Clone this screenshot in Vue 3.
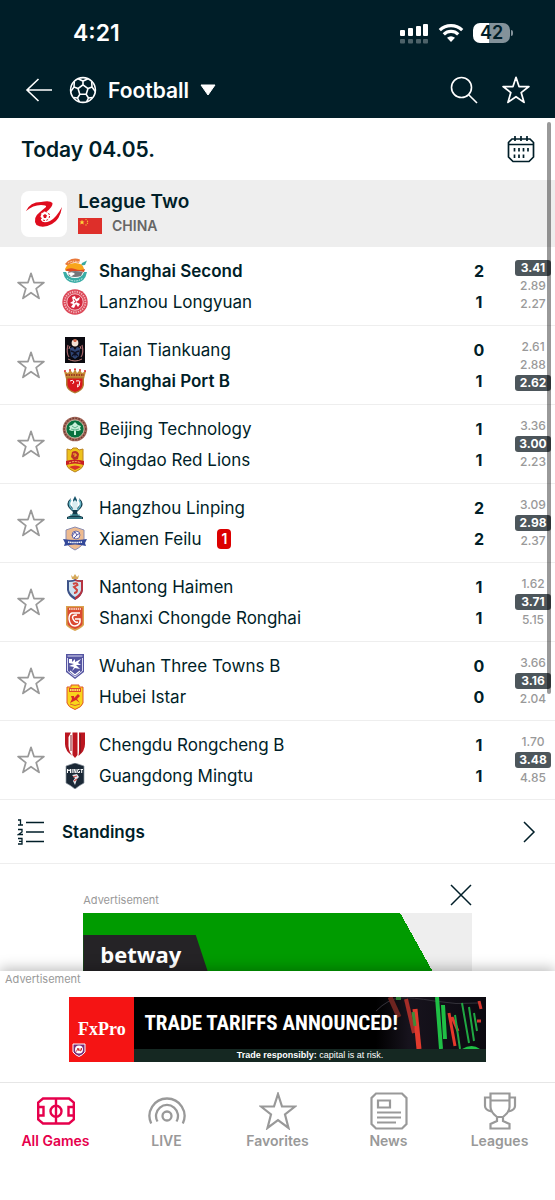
<script setup>
import { ref } from 'vue'

const matches = ref([
  { id: 1, teams: [{ n: 'Shanghai Second', s: 2, c: 'second', w: true }, { n: 'Lanzhou Longyuan', s: 1, c: 'lanzhou' }], odds: ['3.41', '2.89', '2.27'], hit: 0 },
  { id: 2, teams: [{ n: 'Taian Tiankuang', s: 0, c: 'taian' }, { n: 'Shanghai Port B', s: 1, c: 'port', w: true }], odds: ['2.61', '2.88', '2.62'], hit: 2 },
  { id: 3, teams: [{ n: 'Beijing Technology', s: 1, c: 'beijing' }, { n: 'Qingdao Red Lions', s: 1, c: 'qingdao' }], odds: ['3.36', '3.00', '2.23'], hit: 1 },
  { id: 4, teams: [{ n: 'Hangzhou Linping', s: 2, c: 'linping' }, { n: 'Xiamen Feilu', s: 2, c: 'xiamen', red: 1 }], odds: ['3.09', '2.98', '2.37'], hit: 1 },
  { id: 5, teams: [{ n: 'Nantong Haimen', s: 1, c: 'nantong' }, { n: 'Shanxi Chongde Ronghai', s: 1, c: 'shanxi' }], odds: ['1.62', '3.71', '5.15'], hit: 1 },
  { id: 6, teams: [{ n: 'Wuhan Three Towns B', s: 0, c: 'wuhan' }, { n: 'Hubei Istar', s: 0, c: 'hubei' }], odds: ['3.66', '3.16', '2.04'], hit: 1 },
  { id: 7, teams: [{ n: 'Chengdu Rongcheng B', s: 1, c: 'chengdu' }, { n: 'Guangdong Mingtu', s: 1, c: 'mingtu' }], odds: ['1.70', '3.48', '4.85'], hit: 1 }
])

const tabs = [
  { label: 'All Games', icon: 'pitch', on: true },
  { label: 'LIVE', icon: 'live' },
  { label: 'Favorites', icon: 'bigstar' },
  { label: 'News', icon: 'news' },
  { label: 'Leagues', icon: 'cup' }
]
</script>

<template>
  <div class="app">
    <svg class="defs" aria-hidden="true">
      <symbol id="star" viewBox="0 0 26 26">
        <path d="M13 1.200 15.800 9.800H25L17.800 15.400 20.500 24.500 13 19.200 5.500 24.500 8.200 15.400 1 9.800H10.200Z" fill="none" stroke="currentColor" stroke-width="1.600" stroke-linejoin="round" />
      </symbol>

      <symbol id="second" viewBox="0 0 26 26">
        <path d="M3 6A12 12 0 0 1 18 1.500L17 5A9 9 0 0 0 6 8Z" fill="#e9793a" />
        <path d="M20 5 25 2.500 23 7 19 7.500Z" fill="#3aa9a0" />
        <path d="M3 11Q5 5 13 5T22 11L21 13H4Z" fill="#f8a51b" />
        <path d="M3 12Q8 9 13 11T23 11L22 14Q14 12 8 14Z" fill="#e04a23" />
        <path d="M6 14Q13 12 21 14L19 18Q13 20 7 18Z" fill="#75777b" />
        <path d="M6 15Q11 13 13 16L9 18.500Z" fill="#fff" />
        <path d="M1 14 4 14Q6 20 13 20T22 14L25 14Q23 25 13 25T1 14Z" fill="#3aada6" />
        <path d="M5 20Q13 26 21 20" fill="none" stroke="#d8f0ec" stroke-width="1" stroke-dasharray="1.500 1" />
        <path d="M6 5Q11 2 17 4" fill="none" stroke="#ffe1c4" stroke-width="1" stroke-dasharray="1.500 1" />
      </symbol>
      <symbol id="lanzhou" viewBox="0 0 26 26">
        <circle cx="13" cy="13" r="12.700" fill="#dc4757" />
        <circle cx="13" cy="13" r="10.400" fill="none" stroke="#fff" stroke-width="1.800" stroke-dasharray="1.300 1.100" opacity=".6" />
        <circle cx="13" cy="13" r="8.200" fill="#d4283d" stroke="#fff" stroke-width=".7" />
        <path d="M10 8 13 7 14 10 18 8 17 11 14 13 18 15 16 18 14 15 12 19 9 18 11 15 8 14 11 12Z" fill="#fff" />
        <path d="M12 10 14 13 12 14" fill="none" stroke="#d4283d" />
      </symbol>
      <symbol id="taian" viewBox="0 0 26 26">
        <path d="M3 0H23V26H3Z" fill="#0b0a10" />
        <circle cx="13" cy="6" r="3.400" fill="#f1e1d4" />
        <path d="M11 3 13 2 15 3 14 5H12Z" fill="#cf674b" />
        <path d="M6 8Q4 16 7 20M20 8Q22 16 19 20" fill="none" stroke="#a56468" stroke-width="1.200" />
        <path d="M8 11 11 10 13 13 15 10 18 11 17 19 13 22 9 19Z" fill="#304777" />
        <path d="M9 14 12 15 13 18 14 15 17 14M10 19 13 16 16 19" fill="none" stroke="#101020" stroke-width="1.400" />
        <path d="M6 22Q13 26 20 22M8 9 7 12M18 9 19 12" fill="none" stroke="#bb7a78" stroke-width="1" />
      </symbol>
      <symbol id="port" viewBox="0 0 26 26">
        <path d="M2 3 6 5 8 2 11 5 13 1 15 5 18 2 20 5 24 3 22 11H4Z" fill="#c58b35" />
        <path d="M4 7H22" stroke="#8d231d" stroke-width="1.400" stroke-dasharray="1.500 1" />
        <path d="M4 9H22V17Q21 23 13 25.500 5 23 4 17Z" fill="#b37b31" />
        <path d="M5.500 10.500H20.500V17Q20 22 13 24 6 22 5.500 17Z" fill="#d8171d" />
        <path d="M8 13Q11 11 12 14L10.500 16M14 13Q19 12 17.500 15 18 18 15.500 19L16 16" fill="none" stroke="#fff" stroke-width="1" />
        <g fill="#d8262c"><circle cx="3" cy="3" r="1" /><circle cx="8" cy="2" r="1" /><circle cx="13" cy="1.300" r="1" /><circle cx="18" cy="2" r="1" /><circle cx="23" cy="3" r="1" /></g>
      </symbol>
      <symbol id="beijing" viewBox="0 0 26 26">
        <circle cx="13" cy="13" r="12.300" fill="#a66a5c" />
        <circle cx="13" cy="13" r="10.800" fill="none" stroke="#6b3b33" stroke-width="1.400" stroke-dasharray="1.500 1.500" />
        <circle cx="13" cy="13" r="9" fill="#08713e" stroke="#d9d2bd" stroke-width=".7" />
        <path d="M13 6 16 9 19 10 18 12 19 14 16 15 14 14.500V19H12V14.500L10 15 7 14 8 12 7 10 10 9Z" fill="#c8efd8" />
        <path d="M10 10 13 12 16 10M9 13 13 14 17 13" stroke="#43a576" stroke-width=".8" fill="none" />
      </symbol>
      <symbol id="qingdao" viewBox="0 0 26 26">
        <path d="M5 2 9 3 11 1H15L17 3 21 2V19Q20 22 13 25 6 22 5 19Z" fill="#edc21c" stroke="#ba8222" />
        <path d="M10 5Q15 2 17 7L16 12 12 13 9 10Z" fill="#bd3028" />
        <path d="M11 7H14V9H12" stroke="#f8c62b" fill="none" />
        <path d="M4 14Q13 11 22 14V18Q13 15 4 18Z" fill="#c81f25" />
        <path d="M7 20Q13 17 19 20L13 23Z" fill="#d93227" />
        <path d="M7 16Q13 13 19 16" fill="none" stroke="#ffdf6b" stroke-width=".8" stroke-dasharray="2 1" />
      </symbol>
      <symbol id="linping" viewBox="0 0 26 26">
        <path d="M9 3Q3 8 7 13L11 17 10 20 5 22V24H21V22L16 20 15 17 19 13Q23 8 17 3L19 9 15 13H11L7 9Z" fill="#123a4a" />
        <path d="M13 1 15 5 14 11H12L11 5Z" fill="#15526a" />
        <path d="M9 5Q5 10 11 15M17 5Q21 10 15 15" fill="none" stroke="#64b3c5" stroke-width="1.500" />
        <path d="M10 8 13 5 16 8 15 15H11Z" fill="#d9edf1" />
        <path d="M8 20H18M6 23H20" stroke="#50aab4" stroke-width="1.200" />
      </symbol>
      <symbol id="xiamen" viewBox="0 0 26 26">
        <path d="M4 4 13 1 22 4V15Q21 20 13 24 5 20 4 15Z" fill="#eebb90" stroke="#8a8cb2" />
        <circle cx="14" cy="9" r="4" fill="#f4f2fa" stroke="#6b6da5" />
        <path d="M10 10 13 6 15 9 18 7M12 12 15 9" stroke="#5656a0" fill="none" />
        <path d="M1 13Q13 15 25 13L23 17 24 20Q13 17 2 20L3 17Z" fill="#334899" />
        <path d="M6 16Q13 17 20 16" stroke="#fff" stroke-width="1.500" stroke-dasharray="1.500 .6" fill="none" />
      </symbol>
      <symbol id="nantong" viewBox="0 0 26 26">
        <path d="M9 1 11 3 13 0 15 3 17 1 16 5H10Z" fill="#d6a95a" />
        <path d="M5 6Q10 7 13 5 16 7 21 6V16Q20 22 13 26 6 22 5 16Z" fill="#3c5288" />
        <path d="M13 5Q16 7 21 6V16Q20 22 13 26Z" fill="#b73340" />
        <path d="M7 8Q11 8 13 7 15 8 19 8V16Q18 20 13 23 8 20 7 16Z" fill="#cde1ef" />
        <path d="M11 10Q15 8 15.500 11L12 13 15 16Q15 19 12 19" fill="none" stroke="#cf453e" stroke-width="2" />
      </symbol>
      <symbol id="shanxi" viewBox="0 0 26 26">
        <path d="M4 1H22V20Q20 23 13 26 6 23 4 20Z" fill="#d9a24d" />
        <path d="M5.500 2.500H20.500V19Q19 22 13 24 7 22 5.500 19Z" fill="#da4932" />
        <path d="M7 4H19" stroke="#fff2dc" stroke-width="1.600" stroke-dasharray="1.500 .7" />
        <path d="M18 8H10Q7 9 7 14 8 21 13 21 19 20 18 14H13M15 10Q9 10 11 14T16 17" fill="none" stroke="#fff" stroke-width="1.500" />
      </symbol>
      <symbol id="wuhan" viewBox="0 0 26 26">
        <path d="M4 1H22V19L13 26 4 19Z" fill="#5555a1" />
        <path d="M5.500 3H20.500M5.500 5V18L13 24 20.500 18V5" stroke="#dadaf1" fill="none" stroke-width="1" />
        <path d="M7 6H10V9L13 6V9L19 6 16 10 19 12 14 12 18 16 13 15 10 18 12 14 7 13 12 11 7 10Z" fill="#fff" />
        <path d="M8 18 13 22 18 18" fill="none" stroke="#fff" stroke-width="1.300" />
      </symbol>
      <symbol id="hubei" viewBox="0 0 26 26">
        <path d="M5 3H9V1H17V3H21V19Q20 23 13 25.500 6 23 5 19Z" fill="#f9d51c" stroke="#df542b" />
        <path d="M7 4H19V8H7Z" fill="#df4c2b" />
        <path d="M8 6H18" stroke="#ffe268" stroke-width="2" stroke-dasharray="1.500 .7" />
        <path d="M9 12H12V14L16 10 18 12 15 15 18 19 14 16 8 19 10 15Z" fill="#d82b26" />
        <path d="M8 20Q13 23 18 20" stroke="#d9662b" fill="none" />
      </symbol>
      <symbol id="chengdu" viewBox="0 0 26 26">
        <path d="M3 .500H9L6.500 5V14Q7 20 10.500 24 3 19 3 12Z" fill="#bb1620" />
        <path d="M10.500 .500H15.500V23L13 26 10.500 23Z" fill="#bb1620" />
        <path d="M17 .500H23V12Q23 19 16.500 24 17 21 17 18Z" fill="#bb1620" />
        <path d="M9 3V19M18.500 2V21" stroke="#8a1620" stroke-width="1" />
      </symbol>
      <symbol id="mingtu" viewBox="0 0 26 26">
        <path d="M4 3 13 0 22 3V20Q18 22 13 26 8 22 4 20Z" fill="#1b2836" stroke="#8e98a2" stroke-width=".7" />
        <path d="M5.500 10V6L7 8 8.500 6V10M10.200 6V10M12 10V6L14 10V6M17.500 6.500H15.700V9.500H17.500V8M18.500 6.500H21M19.700 6.500V10" fill="none" stroke="#fff" stroke-width="1" />
        <path d="M10 12 15 11 17 14 15 16 13 22 11 18 13 15Z" fill="#e4e8ec" />
        <path d="M11 14 15 13M12 18 15 16" stroke="#d04b49" stroke-width="1.200" />
      </symbol>

      <symbol id="pitch" viewBox="0 0 38 38">
        <path d="M6 6.500H32L36.800 10.500V27.500L32 31.500H6L1.200 27.500V10.500ZM19 6.500V31.500M1.200 15H6.500V23.500H1.200M36.800 15H31.500V23.500H36.800" fill="none" stroke="currentColor" stroke-width="2.400" />
        <circle cx="19" cy="19.200" r="5.500" fill="none" stroke="currentColor" stroke-width="2.400" />
      </symbol>
      <symbol id="live" viewBox="0 0 38 38">
        <g fill="none" stroke="currentColor" stroke-width="2.300">
          <circle cx="19" cy="24" r="4.500" />
          <path d="M9.500 29.500A11 11 0 1 1 28.500 29.500M3.200 31.500A17.500 17.500 0 1 1 34.800 31.500" />
        </g>
      </symbol>
      <symbol id="bigstar" viewBox="0 0 38 38">
        <path d="M19 2 23 14.500H36L26 22.500 29.500 36 19 28.200 8.500 36 12 22.500 2 14.500H15Z" fill="none" stroke="currentColor" stroke-width="2.200" />
      </symbol>
      <symbol id="news" viewBox="0 0 38 38">
        <path d="M6 1.500H32L36.500 6V32L32 36.500H6L1.500 32V6ZM8 8.500H20V15.500H8ZM7 20.500H31M7 25.500H31M7 30.500H26" fill="none" stroke="currentColor" stroke-width="2.200" />
      </symbol>
      <symbol id="cup" viewBox="0 0 38 38">
        <path d="M9.500 1.500H28.500V15Q28.500 20 22 25V29L28.500 32V36.500H9.500V32L16 29V25Q9.500 20 9.500 15ZM9.500 8.500H28.500M9.500 5.500H4V14Q4 18 10.500 19.500M28.500 5.500H34V14Q34 18 27.500 19.500M16 25H22" fill="none" stroke="currentColor" stroke-width="2.200" />
      </symbol>
    </svg>

    <header class="top">
      <div class="status">
        <time class="clock">4:21</time>
        <div class="signals">
          <svg width="30" height="22" viewBox="0 0 30 22" fill="#fff" aria-hidden="true">
            <rect x="1" y="8" width="5" height="6" rx="1" /><rect x="9" y="6" width="5" height="8" rx="1" /><rect x="17" y="4" width="5" height="10" rx="1" /><rect x="24" y="2" width="5" height="12" rx="1" />
            <g opacity=".3"><rect x="1" y="17" width="5" height="4.500" rx="1" /><rect x="9" y="17" width="5" height="4.500" rx="1" /><rect x="17" y="17" width="5" height="4.500" rx="1" /><rect x="24" y="17" width="5" height="4.500" rx="1" /></g>
          </svg>
          <svg width="26" height="20" viewBox="0 0 26 20" aria-hidden="true">
            <path d="M1.800 7.200A16 16 0 0 1 24.200 7.200M5.800 11.300A10.300 10.300 0 0 1 20.200 11.300" fill="none" stroke="#fff" stroke-width="3.200" />
            <path d="M13 19 9 14.800Q13 11.800 17 14.800Z" fill="#fff" />
          </svg>
          <div class="battery"><span>42</span></div>
        </div>
      </div>
      <nav class="bar">
        <button class="plain" aria-label="Back">
          <svg width="28" height="26" viewBox="0 0 28 26" fill="none" stroke="#fff" stroke-width="1.600"><path d="M27 13H2M13.500 2 2 13 13.500 24" /></svg>
        </button>
        <button class="plain sport">
          <svg width="28" height="28" viewBox="0 0 28 28" fill="none" stroke="#fff" stroke-width="1.600" aria-hidden="true">
            <circle cx="14" cy="14" r="12.400" />
            <path d="M14 8.800 19 12.500 17.200 18.300H10.800L9 12.500ZM14 8.800V5M19 12.500 23 11M17.200 18.300 19.500 22M10.800 18.300 8.500 22M9 12.500 5 11M9 2.700 14 5 19 2.700M5 11 5.300 5.500M5 11 1.700 15.500M4.500 21.500 8.500 22 10.500 26M17.500 26 19.500 22 23.500 21.500M26.300 15.500 23 11 22.700 5.500" />
          </svg>
          <span>Football</span>
          <svg width="16" height="12" viewBox="0 0 16 12" aria-hidden="true"><path d="M1 1H15L8 11Z" fill="#fff" stroke="#fff" stroke-linejoin="round" /></svg>
        </button>
        <button class="plain push" aria-label="Search">
          <svg width="28" height="28" viewBox="0 0 28 28" fill="none" stroke="#fff" stroke-width="1.600"><circle cx="11.500" cy="11.500" r="10" /><path d="M18.700 18.700 27 27" /></svg>
        </button>
        <button class="plain" aria-label="Favorites"><svg class="i28"><use href="#star" /></svg></button>
      </nav>
    </header>

    <main class="content">
      <div class="day">
        <h1>Today 04.05.</h1>
        <button class="plain" aria-label="Calendar">
          <svg width="28" height="28" viewBox="0 0 28 28" fill="none" stroke="#001e28" stroke-width="1.700">
            <path d="M5 4H23L26.500 7.500V22L22 26.500H6L1.500 22V7.500ZM1.500 9.500H26.500M8 1V6M14 1V6M20 1V6" />
            <path d="M7.500 13V16.500M12 13V16.500M16.500 13V16.500M21 13V16.500M7.500 19.500V23M12 19.500V23M16.500 19.500V23" />
          </svg>
        </button>
      </div>

      <section class="league">
        <svg class="badge" viewBox="0 0 46 46" aria-hidden="true">
          <path d="M5 20Q9 11 20 11 29 9 31.500 12 32 16 25 21 19 26 20 29 22 33 29 30 35 27 41 16 39 29 31 33 22 38 15.500 34 11 27 19 21L25 16Q26 14 20 14 12 14 5 20Z" fill="#df0c1e" />
          <circle cx="24" cy="25" r="4.500" fill="#fff" stroke="#df0c1e" stroke-dasharray="2 1.500" />
          <path d="M24 23 26 24.500 25 27H23L22 24.500Z" fill="#df0c1e" />
        </svg>
        <div>
          <h2>League Two</h2>
          <p class="country">
            <svg width="24" height="16" viewBox="0 0 24 16" aria-hidden="true">
              <rect width="24" height="16" fill="#de2f2a" />
              <path d="M4 1.500 4.700 3.500H6.500L5.200 4.600 5.700 6.500 4 5.400 2.300 6.500 2.800 4.600 1.500 3.500H3.300Z" fill="#ffd83b" />
              <g fill="#f8bd35"><circle cx="8" cy="1.600" r=".7" /><circle cx="9.500" cy="3.200" r=".7" /><circle cx="9.500" cy="5.300" r=".7" /><circle cx="8" cy="7" r=".7" /></g>
            </svg>
            <span>CHINA</span>
          </p>
        </div>
      </section>

      <ul class="list">
        <li v-for="m in matches" :key="m.id" class="match">
          <button class="plain fav" :aria-label="'Add ' + m.teams[0].n + ' match to favorites'"><svg class="i28"><use href="#star" /></svg></button>
          <div class="teams">
            <div v-for="t in m.teams" :key="t.n" class="team" :class="{ win: t.w }">
              <svg class="crest" aria-hidden="true"><use :href="'#' + t.c" /></svg>
              <span>{{ t.n }}</span>
              <span v-if="t.red" class="red">{{ t.red }}</span>
              <b class="score">{{ t.s }}</b>
            </div>
          </div>
          <div class="odds">
            <span v-for="(o, i) in m.odds" :key="i" :class="{ hit: m.hit === i }">{{ o }}</span>
          </div>
        </li>
      </ul>

      <a href="#standings" class="standings">
        <svg width="28" height="28" viewBox="0 0 28 28" fill="none" stroke="#001e28" stroke-width="1.700" aria-hidden="true">
          <path d="M9 4.500H27M9 14H27M9 23.500H27" />
          <path d="M1 2H3.500V7M1 7H6M1 11.500H5V14L1.500 16.500H6M1 20.500H5V26H1M2 23.300H5" stroke-width="1.300" />
        </svg>
        <span>Standings</span>
        <svg width="14" height="22" viewBox="0 0 14 22" fill="none" stroke="#001e28" stroke-width="1.500" aria-hidden="true"><path d="M2 1 12 11 2 21" /></svg>
      </a>

      <aside class="slot">
        <div class="slothead">
          <span class="adlabel">Advertisement</span>
          <button class="plain" aria-label="Close advertisement">
            <svg width="22" height="22" viewBox="0 0 22 22" stroke="#001e28" stroke-width="1.500"><path d="M1 1 21 21M21 1 1 21" /></svg>
          </button>
        </div>
        <a href="#betway" class="betway"><span>betway</span></a>
      </aside>
      <div class="scrollbar"></div>
    </main>

    <footer class="bottom">
      <span class="adlabel">Advertisement</span>
      <a href="#fxpro" class="fx">
        <span class="fxlogo">FxPro
          <svg class="shield" viewBox="0 0 14 14" aria-hidden="true"><path d="M1 1H13V9Q11 12 7 13.500 3 12 1 9Z" fill="#782c78" stroke="#fff" /><circle cx="7" cy="6.500" r="4" fill="#fff" /><path d="M4.500 8.500 6 5 7 8M8 5.500V8Q10 8 9.500 5" fill="none" stroke="#c5242e" /></svg>
        </span>
        <span class="fxbody">
          <svg class="chart" viewBox="0 0 110 52" preserveAspectRatio="none" aria-hidden="true">
            <path d="M0 14Q12 2 24 1T58 4 102 6" fill="none" stroke="#34323a" />
            <path d="M14 0 23 20" stroke="#6d2420" stroke-width="5" />
            <path d="M20 0H25" stroke="#2f7a34" stroke-width="6" />
            <path d="M30 2 38 36" stroke="#a52d28" stroke-width="4" />
            <path d="M39 12 43 52" stroke="#e23a2d" stroke-width="5" />
            <path d="M37 15 39 29" stroke="#3f8b38" stroke-width="3" />
            <path d="M61 0 65 52M67 8 69 42" stroke="#1fbf45" stroke-width="4" />
            <path d="M73 16 79 49M76 20 82 34" stroke="#e5392b" stroke-width="3" />
            <path d="M79 18 84 52M86 6 93 46M93 10 98 44M98 16 101 34" stroke="#20a742" stroke-width="2" />
            <path d="M103 4 105 12M101 24 105 24" stroke="#d5362e" stroke-width="3" />
            <path d="M86 52Q96 46 104 52Z" fill="#1fbf45" />
          </svg>
          <strong>TRADE TARIFFS ANNOUNCED!</strong>
          <small><b>Trade responsibly:</b> capital is at risk.</small>
        </span>
      </a>
      <nav class="tabs">
        <a v-for="t in tabs" :key="t.label" :href="'#' + t.icon + '-tab'" :class="{ on: t.on }">
          <svg aria-hidden="true"><use :href="'#' + t.icon" /></svg>
          <span>{{ t.label }}</span>
        </a>
      </nav>
    </footer>
  </div>
</template>

<style>
body { margin: 0; background: #fff; }
</style>

<style scoped>
.app { display: flex; flex-direction: column; height: 100vh; overflow: hidden; font-family: Inter, "Liberation Sans", sans-serif; color: #001e28; }
.defs { position: absolute; width: 0; height: 0; }
h1, h2, p, ul { margin: 0; padding: 0; list-style: none; }
a { color: inherit; text-decoration: none; }
.plain { display: flex; align-items: center; padding: 0; border: 0; background: none; color: inherit; font: inherit; }
.i28 { width: 28px; height: 28px; }

.top { flex: none; background: #001e28; color: #fff; }
.status { display: flex; align-items: center; justify-content: space-between; height: 42px; padding: 12px 45px 8px 73px; }
.clock { font-size: 23px; font-weight: 600; }
.signals { display: flex; align-items: center; gap: 9px; }
.battery { position: relative; width: 37px; height: 20px; border-radius: 7px; background: linear-gradient(90deg, #fff 43%, #83929a 43%); color: #001e28; font-size: 18px; font-weight: 600; line-height: 20px; text-align: center; }
.battery::after { content: ""; position: absolute; left: 38px; top: 7px; width: 2px; height: 6px; border-radius: 0 2px 2px 0; background: #83929a; }
.bar { display: flex; align-items: center; gap: 24px; height: 56px; padding: 0 25px; }
.bar .sport { gap: 11px; margin-left: -8px; font-size: 21px; font-weight: 600; }
.push { margin-left: auto; }

.content { position: relative; flex: 1; min-height: 0; overflow: hidden; }
.day { display: flex; align-items: center; justify-content: space-between; height: 62px; padding: 0 20px 0 21px; }
h1 { font-size: 21px; font-weight: 600; }
.league { display: flex; align-items: center; gap: 11px; height: 67px; padding: 0 21px; background: #eee; }
.badge { width: 46px; height: 46px; border-radius: 8px; background: #fff; }
h2 { font-size: 19px; font-weight: 600; line-height: 24px; }
.country { display: flex; align-items: center; gap: 10px; color: #666; font-size: 14px; font-weight: 600; line-height: 24px; }

.match { display: flex; align-items: center; height: 78px; padding-right: 4px; border-bottom: 1px solid #eee; }
.fav { justify-content: center; width: 62px; color: #999; }
.teams { flex: 1; }
.team { display: flex; align-items: center; height: 31px; font-size: 17px; }
.crest { width: 26px; height: 26px; margin-right: 11px; }
.win { font-weight: 600; }
.red { margin-left: 16px; width: 14px; border-radius: 4px; background: #dc0000; color: #fff; font-size: 14px; font-weight: 600; line-height: 20px; text-align: center; }
.score { width: 20px; margin: 0 26px 0 auto; font-size: 16px; font-weight: 700; text-align: center; }
.odds { display: flex; flex-direction: column; gap: 2px; width: 36px; color: #999; font-size: 12px; font-weight: 500; line-height: 16px; text-align: center; }
.hit { border-radius: 3px; background: #4d565b; color: #fff; font-weight: 700; }

.standings { display: flex; align-items: center; gap: 17px; height: 63px; padding: 0 19px 0 17px; border-bottom: 1px solid #eee; font-size: 17px; font-weight: 600; }
.standings span { flex: 1; }

.slot { width: 70%; margin: 0 auto; padding-top: 20px; }
.slothead { display: flex; align-items: flex-start; justify-content: space-between; height: 29px; }
.slothead .adlabel { padding-top: 8px; }
.adlabel { color: #999; font-size: 11px; line-height: 16px; }
.betway { display: flex; align-items: flex-end; height: 60px; background: linear-gradient(61deg, #009b00 83%, #eee 83%); }
.betway span { width: 108px; height: 38px; padding-left: 17px; background: #252326; clip-path: polygon(0 0, 90% 0, 100% 100%, 0 100%); color: #fff; font-family: "Open Sans", sans-serif; font-size: 22px; font-weight: 700; line-height: 38px; }
.scrollbar { position: absolute; top: 4px; right: 4px; width: 4px; height: 67%; border-radius: 2px; background: rgba(0, 0, 0, .4); }

.bottom { position: relative; flex: none; background: #fff; box-shadow: 0 -3px 12px rgba(0, 0, 0, .25); }
.bottom > .adlabel { display: block; padding-left: 5px; }
.fx { display: flex; width: 75%; height: 65px; margin: 10px auto 20px; background: #000; color: #fff; }
.fxlogo { position: relative; width: 65px; background: #f51414; font-family: "Liberation Serif", serif; font-size: 18px; font-weight: 700; line-height: 65px; text-align: center; }
.shield { position: absolute; left: 3px; bottom: 5px; width: 14px; height: 14px; }
.fxbody { position: relative; display: flex; flex: 1; flex-direction: column; }
.chart { position: absolute; right: 0; top: 0; width: 110px; height: 52px; background: linear-gradient(90deg, #000, #17131d 30%, #0b0910); }
.fxbody strong { position: relative; padding-left: 10px; font-family: "Roboto Condensed", "Liberation Sans Narrow", Roboto, sans-serif; font-size: 21px; line-height: 52px; white-space: nowrap; }
.fxbody small { position: relative; background: #152822; font-family: "Liberation Sans", sans-serif; font-size: 9px; line-height: 13px; text-align: center; }
.tabs { display: grid; grid-template-columns: repeat(5, 1fr); height: 117px; border-top: 1px solid #e6e6e6; }
.tabs a { display: flex; flex-direction: column; align-items: center; padding-top: 9px; color: #999; font-size: 14px; font-weight: 600; line-height: 22px; }
.tabs svg { width: 38px; height: 38px; }
.tabs .on { color: #e6004c; }
</style>
